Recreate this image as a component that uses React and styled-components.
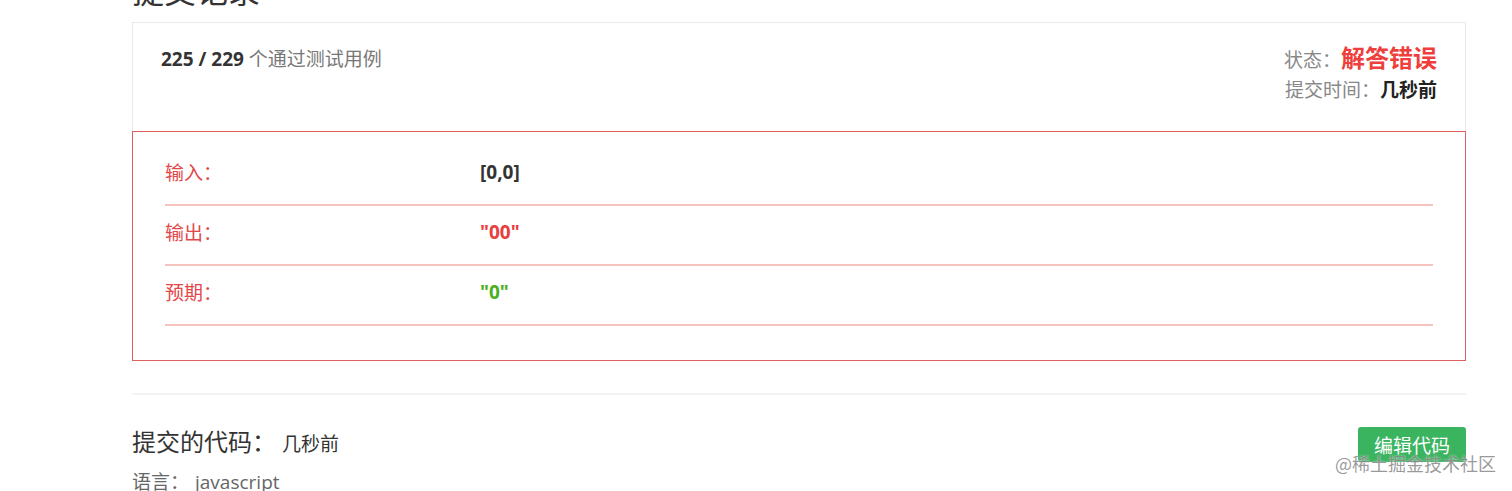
import React from "react";
import styled, { createGlobalStyle } from "styled-components";

const Global = createGlobalStyle`
  html, body { margin: 0; padding: 0; background: #fff; }
  body {
    font-family: "Open Sans", "Noto Sans CJK SC", sans-serif;
    color: #333;
    overflow: hidden;
  }
`;

const Page = styled.div`
  position: relative;
  width: 1512px;
  height: 491px;
  overflow: hidden;
`;

const Container = styled.div`
  width: 1334px;
  margin-left: 132px;
`;

const Title = styled.h3`
  margin: -26px 0 14px;
  font-size: 32px;
  line-height: 34px;
  font-weight: 400;
  color: #333;
`;

const Panel = styled.div`
  border: 1px solid #eaeaea;
  border-bottom: none;
`;

const PanelHeader = styled.div`
  display: flex;
  justify-content: space-between;
  align-items: flex-start;
  height: 108px;
  box-sizing: border-box;
  padding: 21px 28px 0 28px;
`;

const Passed = styled.div`
  font-size: 19px;
  line-height: 30px;
  color: #777;
  strong { color: #333; font-weight: 700; }
`;

const Status = styled.div`
  display: flex;
  flex-direction: column;
  align-items: flex-end;
  margin-top: -1px;
`;

const StatusLine = styled.div`
  font-size: 19px;
  color: #888;
  line-height: 30px;
`;

const StatusValue = styled.span`
  font-size: ${(p) => p.$size};
  font-weight: 700;
  color: ${(p) => p.$color};
`;

const ResultBox = styled.div`
  border: 1px solid #e06060;
  padding: 14px 32px 34px;
`;

const Row = styled.div`
  display: flex;
  align-items: center;
  height: 60px;
  border-bottom: 2px solid #f6c2c0;
  box-sizing: border-box;
  padding-bottom: 6px;
`;

const Label = styled.div`
  width: 315px;
  font-size: 19px;
  color: #e2474a;
`;

const Value = styled.div`
  font-size: 19px;
  font-weight: 700;
  color: ${(p) => p.$color};
`;

const Divider = styled.hr`
  border: none;
  height: 2px;
  background: #f3f3f3;
  margin: 32px 0 0;
`;

const CodeHeader = styled.div`
  display: flex;
  justify-content: space-between;
  align-items: center;
  margin-top: 29px;
`;

const CodeTitle = styled.div`
  font-size: 24px;
  line-height: 36px;
  color: #333;
  span {
    font-size: 19px;
    margin-left: 6px;
  }
`;

const EditButton = styled.button`
  width: 108px;
  height: 35px;
  border: none;
  border-radius: 3px;
  background: #3bb45f;
  color: #fff;
  font-family: "Noto Sans CJK SC", sans-serif;
  font-size: 19px;
  line-height: 35px;
  padding: 0;
  margin-top: 3px;
`;

const Lang = styled.div`
  margin-top: 7px;
  font-size: 19px;
  line-height: 26px;
  color: #666;
  span { margin-left: 6px; }
`;

const Watermark = styled.div`
  position: absolute;
  right: 16px;
  bottom: 15px;
  font-family: "Noto Sans CJK SC", sans-serif;
  font-size: 18px;
  color: rgba(120, 120, 120, 0.75);
  text-shadow: 0 0 2px rgba(255, 255, 255, 0.8);
  pointer-events: none;
`;

const rows = [
  { label: "输入：", value: "[0,0]", color: "#333" },
  { label: "输出：", value: '"00"', color: "#e8403f" },
  { label: "预期：", value: '"0"', color: "#4caf1e" },
];

export default function App() {
  return (
    <Page>
      <Global />
      <Container>
        <Title>提交记录</Title>
        <Panel>
          <PanelHeader>
            <Passed>
              <strong>225 / 229</strong> 个通过测试用例
            </Passed>
            <Status>
              <StatusLine>
                状态：<StatusValue $size="24px" $color="#ee3f3c">解答错误</StatusValue>
              </StatusLine>
              <StatusLine>
                提交时间：<StatusValue $size="19px" $color="#222">几秒前</StatusValue>
              </StatusLine>
            </Status>
          </PanelHeader>
        </Panel>
        <ResultBox>
          {rows.map((r) => (
            <Row key={r.label}>
              <Label>{r.label}</Label>
              <Value $color={r.color}>{r.value}</Value>
            </Row>
          ))}
        </ResultBox>
        <Divider />
        <CodeHeader>
          <CodeTitle>
            提交的代码：<span>几秒前</span>
          </CodeTitle>
          <EditButton>编辑代码</EditButton>
        </CodeHeader>
        <Lang>
          语言：<span>javascript</span>
        </Lang>
      </Container>
      <Watermark>@稀土掘金技术社区</Watermark>
    </Page>
  );
}
